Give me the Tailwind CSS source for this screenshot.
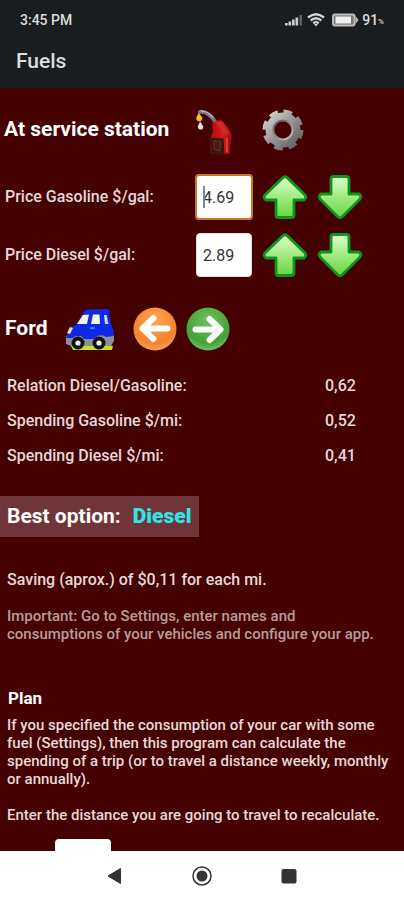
<!DOCTYPE html>
<html lang="en">
<head>
<meta charset="utf-8">
<meta name="viewport" content="width=device-width, initial-scale=1">
<title>Fuels</title>
<script src="https://cdn.jsdelivr.net/npm/@tailwindcss/browser@4"></script>
</head>
<body class="flex h-screen flex-col overflow-hidden bg-[#450001] font-[Roboto,sans-serif] text-[#e6d9d9]">
<!-- shared gradients and icons -->
<svg class="absolute size-0" aria-hidden="true">
  <defs>
    <linearGradient id="leaf" x1="0" y1="0" x2="0" y2="1"><stop offset="0" stop-color="#dcffd0"/><stop offset=".5" stop-color="#a0ea80"/><stop offset="1" stop-color="#66d644"/></linearGradient>
    <linearGradient id="steel" x1="0" y1="0" x2="1" y2="1"><stop offset="0" stop-color="#dadada"/><stop offset=".5" stop-color="#949494"/><stop offset="1" stop-color="#585858"/></linearGradient>
    <linearGradient id="steelRim" x1="0" y1="0" x2="1" y2="1"><stop offset="0" stop-color="#555"/><stop offset="1" stop-color="#c4c4c4"/></linearGradient>
    <radialGradient id="orange" cx=".5" cy=".3" r=".75"><stop offset="0" stop-color="#ffa552"/><stop offset=".7" stop-color="#f5832b"/><stop offset="1" stop-color="#f9a763"/></radialGradient>
    <radialGradient id="green" cx=".5" cy=".3" r=".75"><stop offset="0" stop-color="#6fc35a"/><stop offset=".7" stop-color="#43a335"/><stop offset="1" stop-color="#7cc96a"/></radialGradient>
    <linearGradient id="pump" x1="0" y1="0" x2="1" y2="0"><stop offset="0" stop-color="#a80e10"/><stop offset=".6" stop-color="#d11d1d"/><stop offset="1" stop-color="#a00a0c"/></linearGradient>
    <symbol id="arrow" viewBox="0 0 46 46"><path d="M20.500 4Q23 1.500 25.500 4L43 21Q45 24 42 26H32V41Q32 43.500 29.500 43.500H16.500Q14 43.500 14 41V26H4Q1 24 3 21Z" fill="url(#leaf)" stroke="#10941a" stroke-width="2.800" stroke-linejoin="round"/></symbol>
    <symbol id="arrow-down" viewBox="0 0 46 46"><path d="M20.500 42.500Q23 45 25.500 42.500L43 25Q45 22 42 20H32V5Q32 2.500 29.500 2.500H16.500Q14 2.500 14 5V20H4Q1 22 3 25Z" fill="url(#leaf)" stroke="#10941a" stroke-width="2.800" stroke-linejoin="round"/></symbol>
  </defs>
</svg>

<header class="shrink-0 bg-[#1a1d1f] text-[#dcdcdc]">
  <div class="flex h-10 items-center justify-between px-5 text-[14px] font-medium">
    <span>3:45 PM</span>
    <span class="flex items-center gap-[3px]">
      <svg class="h-3 w-5" viewBox="0 0 20 12" aria-hidden="true"><g fill="#d0d0d0"><rect x="1" y="9" width="2.600" height="2.500"/><rect x="4.500" y="7.500" width="2.600" height="4"/><rect x="8" y="5.500" width="2.600" height="6"/><rect x="11.500" y="3.500" width="2.600" height="8"/></g><rect x="15.500" y="1" width="2.400" height="10.500" fill="#666"/></svg>
      <svg class="h-[14px] w-[18px]" viewBox="0 0 18 14" fill="none" stroke="#d4d4d4" stroke-width="2.300" aria-hidden="true"><path d="M1 4.500Q9-2 17 4.500M3.700 7.500Q9 3 14.300 7.500M6.300 10.300Q9 8 11.700 10.300"/><path d="M7 11 9 13.500 11 11Z" fill="#d4d4d4" stroke="none"/></svg>
      <svg class="ml-1 h-[14px] w-[27px]" viewBox="0 0 27 14" aria-hidden="true"><rect x="1" y="1.500" width="21.500" height="11" rx="2" fill="#777" stroke="#bbb" stroke-width="2"/><rect x="3.500" y="3.500" width="15.500" height="7" fill="#eee"/><path d="M23.500 3 26.500 7 23.500 11Z" fill="#bbb"/></svg>
      <span class="flex items-center">91<span class="pt-1 text-[8px] leading-none">%</span></span>
    </span>
  </div>
  <h1 class="flex h-12 items-center px-4 pb-1 text-[21px] font-medium">Fuels</h1>
</header>

<main class="min-h-0 flex-1 overflow-hidden">
  <section>
    <div class="flex h-[84px] items-center pl-1">
      <h2 class="w-[190px] text-[21px] font-bold text-white">At service station</h2>
      <svg class="h-[50px] w-[42px]" viewBox="0 0 44 52" role="img" aria-label="Fuel nozzle">
        <path d="M6 7Q15 6 22 17" fill="none" stroke="#77758c" stroke-width="4" stroke-linecap="round"/>
        <path d="M7 6Q14 6 20 13" fill="none" stroke="#b9b8ca" stroke-width="1.200"/>
        <path d="M5 8 2.500 13Q2 17 5.500 17T8.500 13Z" fill="#f0c11c"/><path d="M6.500 17 4 22Q4 25.500 7 25.500T9.500 22Z" fill="#d3e4e2"/>
        <path d="M19 19 24 16H29Q36 23 39.500 31L37 51 17.500 51 17 36 20 27Z" fill="url(#pump)"/>
        <path d="M22 18 28 17 37 29 34 32Z" fill="#e03a34" opacity=".5"/>
        <path d="M17 34 31 35 32 52 18 51Z" fill="#3a1510"/><path d="M21 37 28 38 27 48 21 46Z" fill="#4b1812" stroke="#5f3a2a" stroke-width="1"/><path d="M34.500 34V49" stroke="#ee4a3c" stroke-width="1.500"/>
      </svg>
      <button type="button" aria-label="Settings" class="ml-6">
        <svg class="size-[46px]" viewBox="-23 -23 46 46" aria-hidden="true">
          <circle r="17.500" fill="url(#steel)"/>
          <circle r="18" fill="none" stroke="url(#steel)" stroke-width="5" stroke-dasharray="8.500 5.637"/>
          <circle r="9.500" fill="#450001" stroke="url(#steelRim)" stroke-width="2"/>
        </svg>
      </button>
    </div>

    <div class="flex h-[50px] items-center pl-[5px]">
      <label for="gas" class="w-[190px] text-base font-medium">Price Gasoline $/gal:</label>
      <span class="relative">
        <input id="gas" value="4.69" inputmode="decimal" class="block h-[46px] w-[58px] rounded-[4px] border-2 border-[#c67a20] bg-white pl-[6px] text-base text-[#333] outline-none">
        <span class="absolute top-3 left-[8px] h-[22px] w-[2px] bg-[#6f8db0]"></span>
      </span>
      <button type="button" aria-label="Raise gasoline price" class="ml-[9px]"><svg class="size-[46px]" aria-hidden="true"><use href="#arrow"/></svg></button>
      <button type="button" aria-label="Lower gasoline price" class="ml-[9px]"><svg class="size-[46px]" aria-hidden="true"><use href="#arrow-down"/></svg></button>
    </div>
    <div class="mt-2 flex h-[50px] items-center pl-[5px]">
      <label for="diesel" class="w-[190px] text-base font-medium">Price Diesel $/gal:</label>
      <span class="px-px"><input id="diesel" value="2.89" inputmode="decimal" class="block h-11 w-14 rounded-[4px] border border-[#ddd] bg-white pl-[6px] text-base text-[#333] outline-none"></span>
      <button type="button" aria-label="Raise diesel price" class="ml-[9px]"><svg class="size-[46px]" aria-hidden="true"><use href="#arrow"/></svg></button>
      <button type="button" aria-label="Lower diesel price" class="ml-[9px]"><svg class="size-[46px]" aria-hidden="true"><use href="#arrow-down"/></svg></button>
    </div>
  </section>

  <section>
    <div class="mt-6 flex h-[50px] items-center pl-[5px]">
      <h2 class="w-[60px] text-[21px] font-bold text-white">Ford</h2>
      <svg class="h-[44px] w-[50px]" viewBox="0 0 50 44" role="img" aria-label="Car">
        <path d="M6 39H48L47 43H8Z" fill="#c9dc1e"/>
        <path d="M1 29 49 28V34L46 39H6L1 37Z" fill="#8c8f9c"/>
        <path d="M2 28Q3 20 11 18L18 6Q19 3 23 2.500L42 2 45 4 44 7 47 20Q49 23 48.500 29L41 30Q35 25 29 32H19Q14 25 8 31L1 31Z" fill="#1029e8"/>
        <path d="M12 17 18 8 24 7.500 22 17Z" fill="#f2f3e4"/><path d="M28 7.500H34.500L35 17H26Z" fill="#f2f3e4"/><path d="M39 8 41.500 8 43.500 17H40Z" fill="#cdd4ee"/>
        <path d="M2 26 5 20 8 21 5 27Z" fill="#f1dc9a"/><path d="M25 21H30" stroke="#46a0ee" stroke-width="1.500"/>
        <circle cx="13" cy="36" r="6.500" fill="#111"/><circle cx="13" cy="36" r="2.600" fill="#eee"/><circle cx="34" cy="36" r="6.500" fill="#111"/><circle cx="34" cy="36" r="2.600" fill="#eee"/>
      </svg>
      <button type="button" aria-label="Previous vehicle" class="ml-[18px]"><svg class="size-11" viewBox="0 0 44 44" aria-hidden="true"><circle cx="22" cy="22" r="21.500" fill="url(#orange)"/><path d="M34.500 21.500H10M20.500 11 9.500 21.500 20.500 32" fill="none" stroke="#fff" stroke-width="6" stroke-linecap="round" stroke-linejoin="round"/></svg></button>
      <button type="button" aria-label="Next vehicle" class="ml-[9px]"><svg class="size-11" viewBox="0 0 44 44" aria-hidden="true"><circle cx="22" cy="22" r="21.500" fill="url(#green)"/><path d="M9.500 22.500H34M23.500 12 34.500 22.500 23.500 33" fill="none" stroke="#fff" stroke-width="6" stroke-linecap="round" stroke-linejoin="round"/></svg></button>
    </div>

    <table class="mt-[14px] w-full text-left text-base font-medium">
      <tbody>
        <tr class="h-[35px]"><th scope="row" class="w-[325px] p-0 pl-[7px] font-medium">Relation Diesel/Gasoline:</th><td class="p-0">0,62</td></tr>
        <tr class="h-[35px]"><th scope="row" class="p-0 pl-[7px] font-medium">Spending Gasoline $/mi:</th><td class="p-0">0,52</td></tr>
        <tr class="h-[35px]"><th scope="row" class="p-0 pl-[7px] font-medium">Spending Diesel $/mi:</th><td class="p-0">0,41</td></tr>
      </tbody>
    </table>

    <p class="mt-[23px] flex h-[41px] w-fit items-center gap-3 bg-[#6f3538] px-[7px] text-[21px] font-bold text-white">Best option: <strong class="text-[#2ce6ea]">Diesel</strong></p>
    <p class="mt-[33px] px-[7px] text-base leading-5 font-medium">Saving (aprox.) of $0,11 for each mi.</p>
    <p class="mt-[17px] px-[7px] text-[15px] leading-[18px] font-medium text-[#b79c9c]">Important: Go to Settings, enter names and<br>consumptions of your vehicles and configure your app.</p>
  </section>

  <section>
    <h2 class="mt-[45px] px-2 text-[17px] leading-5 font-bold text-white">Plan</h2>
    <p class="mt-2 pl-[7px] text-[15px] leading-[18px] font-medium">If you specified the consumption of your car with some<br>fuel (Settings), then this program can calculate the<br>spending of a trip (or to travel a distance weekly, monthly<br>or annually).</p>
    <p class="mt-[18px] pl-[7px] text-[15px] leading-[18px] font-medium"><label for="distance">Enter the distance you are going to travel to recalculate.</label></p>
    <input id="distance" inputmode="decimal" class="mt-[15px] ml-[55px] block h-11 w-14 rounded-[4px] bg-white px-2 text-base text-[#333]">
  </section>
</main>

<nav aria-label="System" class="grid h-[49px] shrink-0 grid-cols-[1fr_87px_87px_87px_1fr] bg-white">
  <button type="button" aria-label="Back" class="col-start-2 grid place-items-center"><svg class="size-5" viewBox="0 0 20 20" aria-hidden="true"><path d="M3 10 15.500 2.500V17.500Z" fill="#333" stroke="#333" stroke-linejoin="round"/></svg></button>
  <button type="button" aria-label="Home" class="grid place-items-center"><svg class="size-5" viewBox="0 0 20 20" aria-hidden="true"><circle cx="10" cy="10" r="9" fill="none" stroke="#333" stroke-width="1.500"/><circle cx="10" cy="10" r="5.500" fill="#333"/></svg></button>
  <button type="button" aria-label="Recent apps" class="grid place-items-center"><svg class="size-5" viewBox="0 0 20 20" aria-hidden="true"><rect x="2.500" y="3" width="15" height="14.500" rx="2" fill="#333"/></svg></button>
</nav>
</body>
</html>
